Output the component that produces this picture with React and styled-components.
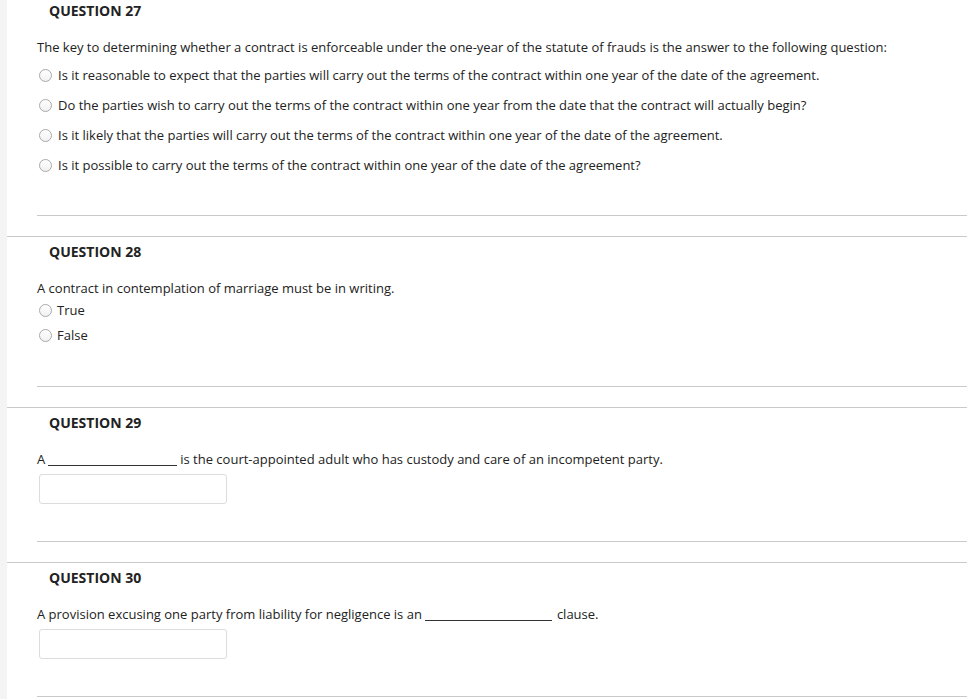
import React from 'react';
import styled, { createGlobalStyle } from 'styled-components';

const GlobalStyle = createGlobalStyle`
  html, body {
    margin: 0;
    padding: 0;
    background: #ffffff;
  }
  body {
    font-family: 'Open Sans', 'Liberation Sans', sans-serif;
    font-size: 13px;
    color: #222;
  }
`;

const Page = styled.div`
  min-height: 699px;
  padding-left: 7px;
  background: #f4f4f4;
  overflow: hidden;
`;

const Content = styled.div`
  background: #fff;
  min-height: 699px;
`;

const Block = styled.section`
  padding: ${(p) => (p.first ? '2px' : '6px')} 0 20px 30px;
  border-top: ${(p) => (p.first ? 'none' : '1px solid #c9c9c9')};
`;

const Title = styled.h3`
  margin: 0;
  padding-left: 12px;
  font-size: 14px;
  line-height: 18px;
  font-weight: 700;
  color: #222;
`;

const Prompt = styled.p`
  margin: 18px 0 0;
  line-height: 18px;
  color: #222;
`;

const Options = styled.div`
  margin-top: ${(p) => p.top}px;
  display: flex;
  flex-direction: column;
  gap: ${(p) => p.gap}px;
`;

const Option = styled.label`
  display: flex;
  align-items: center;
  height: 18px;
  line-height: 18px;
  padding-left: 2px;
`;

const Radio = styled.span`
  width: 11px;
  height: 11px;
  border-radius: 50%;
  border: 1px solid #a9a9a9;
  background: linear-gradient(#ffffff, #f1f1f1);
  margin-right: ${(p) => p.space}px;
  flex-shrink: 0;
`;

const Blank = styled.span`
  display: inline-block;
  width: ${(p) => p.w}px;
  height: 13px;
  border-bottom: 1px solid #333;
  margin: 0 ${(p) => p.after}px 0 3px;
  vertical-align: -2px;
`;

const Answer = styled.div`
  margin: 6px 0 0 2px;
  width: 186px;
  height: 28px;
  border: 1px solid #dcdcdc;
  border-radius: 3px;
  background: #fff;
`;

const Divider = styled.hr`
  margin: ${(p) => p.top}px 0 0;
  border: none;
  border-top: 1px solid #c9c9c9;
  height: 0;
`;

const q27 = [
  'Is it reasonable to expect that the parties will carry out the terms of the contract within one year of the date of the agreement.',
  'Do the parties wish to carry out the terms of the contract within one year from the date that the contract will actually begin?',
  'Is it likely that the parties will carry out the terms of the contract within one year of the date of the agreement.',
  'Is it possible to carry out the terms of the contract within one year of the date of the agreement?',
];

export default function App() {
  return (
    <>
      <GlobalStyle />
      <Page>
        <Content>
          <Block first>
            <Title>QUESTION 27</Title>
            <Prompt>
              The key to determining whether a contract is enforceable under the one-year of the statute
              of frauds is the answer to the following question:
            </Prompt>
            <Options top={10} gap={12}>
              {q27.map((o) => (
                <Option key={o}>
                  <Radio space={6} />
                  {o}
                </Option>
              ))}
            </Options>
            <Divider top={41} />
          </Block>

          <Block>
            <Title>QUESTION 28</Title>
            <Prompt>A contract in contemplation of marriage must be in writing.</Prompt>
            <Options top={4} gap={7}>
              <Option>
                <Radio space={5} />
                True
              </Option>
              <Option>
                <Radio space={5} />
                False
              </Option>
            </Options>
            <Divider top={42} />
          </Block>

          <Block>
            <Title>QUESTION 29</Title>
            <Prompt>
              A<Blank w={129} after={3} />is the court-appointed adult who has custody and care of an
              incompetent party.
            </Prompt>
            <Answer />
            <Divider top={37} />
          </Block>

          <Block>
            <Title>QUESTION 30</Title>
            <Prompt>
              A provision excusing one party from liability for negligence is an
              <Blank w={127} after={5} />
              clause.
            </Prompt>
            <Answer />
            <Divider top={37} />
          </Block>
        </Content>
      </Page>
    </>
  );
}
